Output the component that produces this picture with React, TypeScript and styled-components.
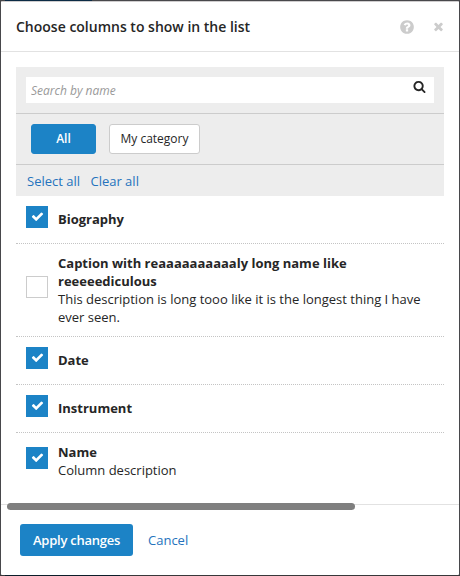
import React from "react";
import styled, { createGlobalStyle } from "styled-components";

const GlobalStyle = createGlobalStyle`
  *, *::before, *::after { box-sizing: border-box; }
  body {
    margin: 0;
    background: #48484b;
    color: #262626;
    font-family: "Open Sans", sans-serif;
    font-size: 13px;
    line-height: 18px;
  }
  button, input { font: inherit; color: inherit; margin: 0; }
`;

const Backdrop = styled.div`
  width: 460px;
  height: 576px;
  padding: 1px;
  background: linear-gradient(90deg, #48484b 5px, #0c2b45 5px 92px, #48484b 92px) top / 100% 1px no-repeat,
    linear-gradient(90deg, #38383a 5px, #0b1d29 5px 120px, #38383a 120px) bottom / 100% 1px no-repeat,
    #48484b;
`;

const Dialog = styled.div`
  display: flex;
  flex-direction: column;
  width: 458px;
  height: 574px;
  background: #fff;
  border-top: 1px solid #cfcdce;
  border-radius: 1px;
`;

const Header = styled.header`
  display: flex;
  align-items: center;
  height: 50px;
  padding: 0 14px 0 15px;
  border-bottom: 1px solid #e2e2e2;
`;

const Title = styled.h1`
  flex: 1;
  margin: 0;
  font-size: 14px;
  font-weight: 600;
  line-height: 20px;
`;

const IconButton = styled.button<{ $gap?: number }>`
  display: flex;
  padding: 0;
  margin-left: ${(p) => p.$gap ?? 0}px;
  border: 0;
  background: none;
  color: #ccc;
`;

const Content = styled.div`
  height: 452px;
  padding: 15px 15px 0;
`;

const Filters = styled.section`
  background: #ededed;
`;

const SearchBar = styled.div`
  height: 47px;
  padding: 10px;
  border-bottom: 1px solid #ccc;
`;

const SearchField = styled.label`
  display: flex;
  align-items: center;
  height: 26px;
  padding: 0 8px 0 5px;
  background: #fff;

  svg { margin-top: -7px; }
`;

const SearchInput = styled.input`
  flex: 1;
  min-width: 0;
  height: 26px;
  padding: 0;
  border: 0;
  outline: 0;
  background: none;
  font-size: 12px;

  &::placeholder { color: #999; font-style: italic; opacity: 1; }
`;

const Categories = styled.div`
  display: flex;
  gap: 13px;
  height: 51px;
  padding: 10px 15px;
  border-bottom: 1px solid #ccc;
`;

const CategoryButton = styled.button<{ $active?: boolean; $width: number }>`
  width: ${(p) => p.$width}px;
  height: 30px;
  padding: 0;
  border: 1px solid ${(p) => (p.$active ? "#1c83c6" : "#ccc")};
  border-radius: 3px;
  background: ${(p) => (p.$active ? "#1c83c6" : "#fff")};
  color: ${(p) => (p.$active ? "#fff" : "#262626")};
  font-size: 12px;
  font-weight: ${(p) => (p.$active ? 600 : 400)};
`;

const BulkActions = styled.div`
  display: flex;
  gap: 10.4px;
  height: 31px;
  padding: 7px 11px;
`;

const LinkButton = styled.button`
  padding: 0;
  border: 0;
  background: none;
  color: #2573bd;
  white-space: nowrap;
`;

const ColumnList = styled.ul`
  margin: 0;
  padding: 0;
  list-style: none;
`;

const ColumnRow = styled.li`
  display: flex;
  align-items: center;
  padding: 10px;

  & + & { border-top: 1px dotted #c4c4c4; }
`;

const CheckCell = styled.div`
  flex: none;
  width: 32px;
  height: 27px;
  margin: -0.25px 0 0.25px;
`;

const CheckBox = styled.span<{ $checked: boolean }>`
  display: flex;
  justify-content: center;
  width: 22px;
  height: 22px;
  padding-top: 3px;
  border: 1px solid ${(p) => (p.$checked ? "#1c83c6" : "#ccc")};
  background: ${(p) => (p.$checked ? "#1c83c6" : "#fff")};
  color: #fff;
`;

const ColumnText = styled.div`
  margin: -0.25px 0 0.25px;
`;

const ColumnName = styled.div`
  font-weight: 700;
`;

const Footer = styled.footer`
  display: flex;
  align-items: center;
  gap: 15px;
  height: 71px;
  padding: 0 19px;
  border-top: 1px solid #e2e2e2;
  position: relative;
`;

const ScrollThumb = styled.div`
  position: absolute;
  left: 6px;
  top: -2px;
  width: 348px;
  height: 7px;
  border-radius: 4px;
  background: #7f7f7f;
`;

const ApplyButton = styled.button`
  width: 113px;
  height: 32px;
  padding: 0;
  border: 0;
  border-radius: 3px;
  background: #1c83c6;
  color: #fff;
  font-weight: 600;
  letter-spacing: -0.25px;
`;

const paths = {
  close:
    "M1490 1322q0 40-28 68l-136 136q-28 28-68 28t-68-28l-294-294-294 294q-28 28-68 28t-68-28l-136-136q-28-28-28-68t28-68l294-294-294-294q-28-28-28-68t28-68l136-136q28-28 68-28t68 28l294 294 294-294q28-28 68-28t68 28l136 136q28 28 28 68t-28 68l-294 294 294 294q28 28 28 68z",
  check:
    "M1671 566q0 40-28 68l-724 724-136 136q-28 28-68 28t-68-28l-136-136-362-362q-28-28-28-68t28-68l136-136q28-28 68-28t68 28l294 295 656-657q28-28 68-28t68 28l136 136q28 28 28 68z",
  search:
    "M1216 832q0-185-131.5-316.5t-316.5-131.5-316.5 131.5-131.5 316.5 131.5 316.5 316.5 131.5 316.5-131.5 131.5-316.5zm512 832q0 52-38 90t-90 38q-54 0-90-38l-343-342q-179 124-399 124-143 0-273.5-55.5t-225-150-150-225-55.5-273.5 55.5-273.5 150-225 225-150 273.5-55.5 273.5 55.5 225 150 150 225 55.5 273.5q0 220-124 399l343 343q37 37 37 90z",
  help:
    "M1024 1376v-192q0-14-9-23t-23-9h-192q-14 0-23 9t-9 23v192q0 14 9 23t23 9h192q14 0 23-9t9-23zm256-672q0-88-55.5-163t-138.5-116-170-41q-243 0-371 213-15 24 8 42l132 100q7 6 19 6 16 0 25-12 53-68 86-92 34-24 86-24 48 0 85.5 26t37.5 59q0 38-20 61t-68 45q-63 28-115.5 86.5t-52.5 125.5v36q0 14 9 23t23 9h192q14 0 23-9t9-23q0-19 21.5-49.5t54.5-49.5q32-18 49-28.5t46-35 44.5-48 28-60.5 12.5-81zm384 192q0 209-103 385.5t-279.5 279.5-385.5 103-385.5-103-279.5-279.5-103-385.5 103-385.5 279.5-279.5 385.5-103 385.5 103 279.5 279.5 103 385.5z",
};

function Icon({ name, size }: { name: keyof typeof paths; size: number }) {
  return (
    <svg width={size} height={size} viewBox="0 0 1792 1792" fill="currentColor" aria-hidden="true">
      <path d={paths[name]} />
    </svg>
  );
}

interface Column {
  name: string;
  description?: string;
  checked: boolean;
}

const columns: Column[] = [
  { name: "Biography", checked: true },
  {
    name: "Caption with reaaaaaaaaaaly long name like reeeeediculous",
    description: "This description is long tooo like it is the longest thing I have ever seen.",
    checked: false,
  },
  { name: "Date", checked: true },
  { name: "Instrument", checked: true },
  { name: "Name", description: "Column description", checked: true },
];

export default function App() {
  return (
    <>
      <GlobalStyle />
      <Backdrop>
        <Dialog role="dialog" aria-label="Choose columns">
          <Header>
            <Title>Choose columns to show in the list</Title>
            <IconButton aria-label="Help">
              <Icon name="help" size={16} />
            </IconButton>
            <IconButton aria-label="Close" $gap={17}>
              <Icon name="close" size={13} />
            </IconButton>
          </Header>
          <Content>
            <Filters>
              <SearchBar>
                <SearchField>
                  <SearchInput placeholder="Search by name" />
                  <Icon name="search" size={13} />
                </SearchField>
              </SearchBar>
              <Categories>
                <CategoryButton $active $width={65}>All</CategoryButton>
                <CategoryButton $width={91}>My category</CategoryButton>
              </Categories>
              <BulkActions>
                <LinkButton>Select all</LinkButton>
                <LinkButton>Clear all</LinkButton>
              </BulkActions>
            </Filters>
            <ColumnList>
              {columns.map((column) => (
                <ColumnRow key={column.name}>
                  <CheckCell>
                    <CheckBox $checked={column.checked} role="checkbox" aria-checked={column.checked}>
                      {column.checked && <Icon name="check" size={13} />}
                    </CheckBox>
                  </CheckCell>
                  <ColumnText>
                    <ColumnName>{column.name}</ColumnName>
                    {column.description}
                  </ColumnText>
                </ColumnRow>
              ))}
            </ColumnList>
          </Content>
          <Footer>
            <ScrollThumb />
            <ApplyButton>Apply changes</ApplyButton>
            <LinkButton>Cancel</LinkButton>
          </Footer>
        </Dialog>
      </Backdrop>
    </>
  );
}
